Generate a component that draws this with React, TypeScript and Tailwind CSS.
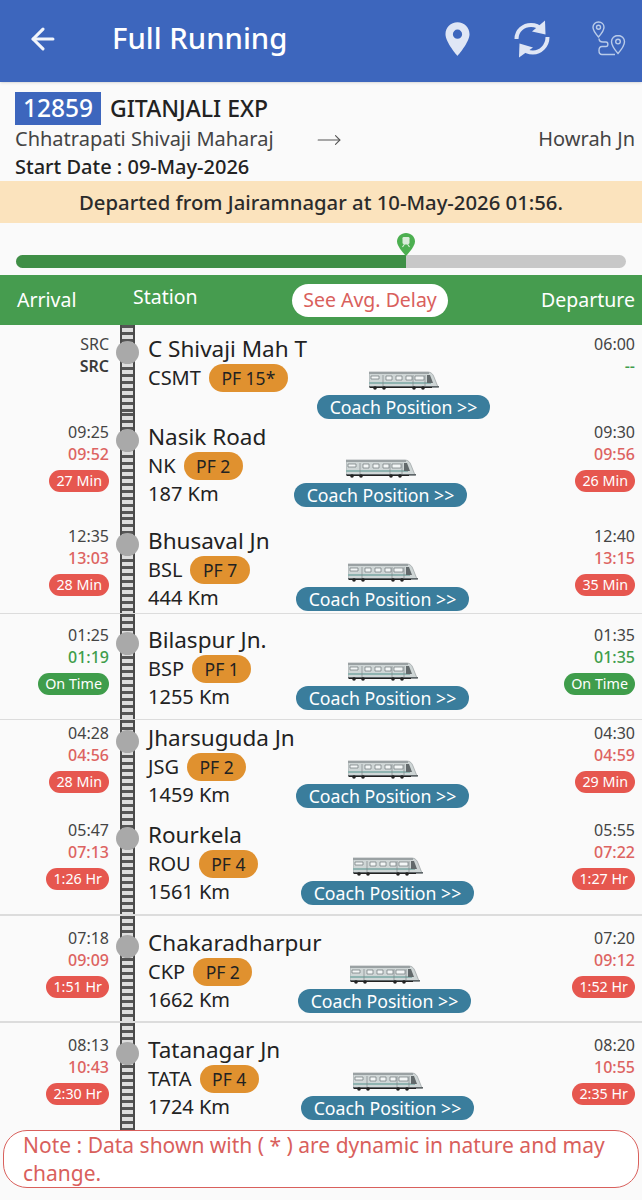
import { ArrowLeft, MoveRight } from 'lucide-react'

type Status = { text: string; tone: 'late' | 'ok' }

type Stop = {
  name: string
  code: string
  pf: string
  km?: string
  arr: string
  arrAct: string
  arrStatus?: Status
  dep: string
  depAct: string
  depStatus?: Status
  rowClass: string
  topClass: string
  coachClass: string
}

const late = (text: string): Status => ({ text, tone: 'late' })
const onTime: Status = { text: 'On Time', tone: 'ok' }

const stops: Stop[] = [
  { name: 'C Shivaji Mah T', code: 'CSMT', pf: 'PF 15*', arr: 'SRC', arrAct: 'SRC', dep: '06:00', depAct: '--', rowClass: 'h-[88px]', topClass: 'pt-[7px]', coachClass: 'ml-[23px]' },
  { name: 'Nasik Road', code: 'NK', pf: 'PF 2', km: '187 Km', arr: '09:25', arrAct: '09:52', arrStatus: late('27 Min'), dep: '09:30', depAct: '09:56', depStatus: late('26 Min'), rowClass: 'h-[104px]', topClass: 'pt-[7px]', coachClass: 'ml-0' },
  { name: 'Bhusaval Jn', code: 'BSL', pf: 'PF 7', km: '444 Km', arr: '12:35', arrAct: '13:03', arrStatus: late('28 Min'), dep: '12:40', depAct: '13:15', depStatus: late('35 Min'), rowClass: 'h-[97px] border-b border-[#dcdcdc]', topClass: 'pt-[7px]', coachClass: 'ml-[2px]' },
  { name: 'Bilaspur Jn.', code: 'BSP', pf: 'PF 1', km: '1255 Km', arr: '01:25', arrAct: '01:19', arrStatus: onTime, dep: '01:35', depAct: '01:35', depStatus: onTime, rowClass: 'h-[106px] border-b border-[#dcdcdc]', topClass: 'pt-[9px]', coachClass: 'ml-[2px]' },
  { name: 'Jharsuguda Jn', code: 'JSG', pf: 'PF 2', km: '1459 Km', arr: '04:28', arrAct: '04:56', arrStatus: late('28 Min'), dep: '04:30', depAct: '04:59', depStatus: late('29 Min'), rowClass: 'h-[91px]', topClass: 'pt-[1px]', coachClass: 'ml-[2px]' },
  { name: 'Rourkela', code: 'ROU', pf: 'PF 4', km: '1561 Km', arr: '05:47', arrAct: '07:13', arrStatus: late('1:26 Hr'), dep: '05:55', depAct: '07:22', depStatus: late('1:27 Hr'), rowClass: 'h-[105px] border-b-2 border-[#dcdcdc]', topClass: 'pt-[7px]', coachClass: 'ml-[7px]' },
  { name: 'Chakaradharpur', code: 'CKP', pf: 'PF 2', km: '1662 Km', arr: '07:18', arrAct: '09:09', arrStatus: late('1:51 Hr'), dep: '07:20', depAct: '09:12', depStatus: late('1:52 Hr'), rowClass: 'h-[107px] border-b-2 border-[#dcdcdc]', topClass: 'pt-[10px]', coachClass: 'ml-[4px]' },
  { name: 'Tatanagar Jn', code: 'TATA', pf: 'PF 4', km: '1724 Km', arr: '08:13', arrAct: '10:43', arrStatus: late('2:30 Hr'), dep: '08:20', depAct: '10:55', depStatus: late('2:35 Hr'), rowClass: 'h-[107px]', topClass: 'pt-[10px]', coachClass: 'ml-[7px]' },
]

function PinIcon() {
  return (
    <svg width="25" height="36" viewBox="0 0 26 36" fill="#dfe6f5" aria-hidden="true">
      <path fillRule="evenodd" d="M13 0.5C5.900 0.500 0.500 6 0.500 13c0 8.400 12.500 22.500 12.500 22.500S25.500 21.400 25.500 13C25.500 6 20.100 0.500 13 0.500zM13 8.200a4.800 4.800 0 1 1 0 9.600a4.800 4.800 0 0 1 0-9.600z" />
    </svg>
  )
}

function SyncIcon() {
  return (
    <svg width="36" height="38" viewBox="0 0 36 38" fill="none" aria-hidden="true">
      <path d="M2.500 19C2.500 10.500 9.500 5 17 5c4.500 0 8 1.500 10.500 4.500" stroke="#dfe6f5" strokeWidth="4" />
      <path d="M31 0.500L31.500 14.500L18 11.500z" fill="#dfe6f5" />
      <path d="M33.500 17C33.500 26 26.500 32.500 19 32.500c-4.500 0-8-1.500-10.500-4.500" stroke="#dfe6f5" strokeWidth="4" />
      <path d="M5 37.500L5.500 23.500L19 27.500z" fill="#dfe6f5" />
    </svg>
  )
}

function RouteIcon() {
  return (
    <svg width="34" height="36" viewBox="0 0 34 36" fill="none" stroke="#b9cbe9" strokeWidth="1.400" aria-hidden="true">
      <path d="M6.500 1C3.400 1 1 3.300 1 6.300c0 3.600 5.500 9.700 5.500 9.700S12 9.900 12 6.300C12 3.300 9.600 1 6.500 1z" />
      <circle cx="6.500" cy="6.300" r="2" />
      <path d="M26 14.500c-3.600 0-6.500 2.800-6.500 6.200c0 4.300 6.500 11.800 6.500 11.800s6.500-7.500 6.500-11.800c0-3.400-2.900-6.200-6.500-6.200z" />
      <circle cx="26" cy="20.600" r="2.300" />
      <path d="M7 17.500c0 2.500 1.500 3.500 4 3.500h3c2.500 0 2.500 4.500 0 4.500H10c-4 0-4 8 0 8h13" />
    </svg>
  )
}

function TrainPic() {
  return (
    <svg width="70" height="19" viewBox="0 0 70 19" aria-hidden="true">
      <path d="M0 1h59c3 0 5 2 6 5l4 10H0z" fill="#cfd6d6" stroke="#8b9294" strokeWidth="0.600" />
      <rect x="0" y="1" width="60" height="2" fill="#9aa1a3" />
      <rect x="0" y="11" width="62" height="2" fill="#8fb3b0" />
      <path d="M2 5h8v3H2zM17 5h6v4h-6zM27 5h6v4h-6zM37 5h6v4h-6zM46 5h9v4h-9z" fill="#f3f6f6" stroke="#6f7779" strokeWidth="0.700" />
      <path d="M58 4h3l3 8h-6z" fill="#62696b" />
      <path d="M14 4v11M44 4v11M56 4v11" stroke="#7f8789" strokeWidth="0.700" />
      <rect x="0" y="15" width="70" height="1.600" fill="#5e6568" />
      <rect x="1" y="16" width="62" height="1" fill="#222" />
      <circle cx="6" cy="17" r="1.800" fill="#222" />
      <circle cx="15" cy="17" r="1.800" fill="#222" />
      <circle cx="45" cy="17" r="1.800" fill="#222" />
      <circle cx="54" cy="17" r="1.800" fill="#222" />
    </svg>
  )
}

function TimeCell({
  planned,
  actual,
  status,
}: {
  planned: string
  actual: string
  status?: Status
}) {
  const isSrc = actual === 'SRC'
  const isEmpty = actual === '--'
  const actualTone = isSrc
    ? 'text-[#3a3a3a] font-semibold'
    : isEmpty || status?.tone === 'ok'
      ? 'text-[#3f9d4b] font-medium'
      : 'text-[#dd6361] font-medium'
  return (
    <div className="flex flex-col items-end">
      <p className="text-[16px] leading-[22px] text-[#444]">{planned}</p>
      <p className={`text-[16px] leading-[22px] ${actualTone}`}>{actual}</p>
      {status && (
        <span
          className={`mt-[5px] flex h-[22px] items-center rounded-full px-[7px] text-[14.300px] text-white ${
            status.tone === 'ok' ? 'bg-[#3f9d4b]' : 'bg-[#e6574f]'
          }`}
        >
          {status.text}
        </span>
      )}
    </div>
  )
}

function StopRow({ stop }: { stop: Stop }) {
  return (
    <div className={`flex ${stop.rowClass}`}>
      <div className={`w-[109px] shrink-0 ${stop.topClass}`}>
        <div className="mt-px">
          <TimeCell planned={stop.arr} actual={stop.arrAct} status={stop.arrStatus} />
        </div>
      </div>
      <div
        className={`ml-[11px] w-[15px] shrink-0 self-stretch bg-[linear-gradient(90deg,#4a4a4a_0,#4a4a4a_2px,transparent_2px,transparent_13px,#4a4a4a_13px),repeating-linear-gradient(180deg,#555_0,#555_3px,#dedede_3px,#dedede_7px)] ${stop.topClass}`}
      >
        <div className="mt-[9px] -ml-[4px] h-[23px] w-[23px] rounded-full bg-[#a9a9a9]" />
      </div>
      <div className={`ml-[13px] w-[146px] shrink-0 whitespace-nowrap ${stop.topClass}`}>
        <p className="text-[22.500px] leading-[34px] text-[#222]">{stop.name}</p>
        <div className="-mt-[2px] flex items-center gap-[8px]">
          <span className="text-[20px] leading-[28px] text-[#222]">{stop.code}</span>
          <span className="flex h-[28px] items-center rounded-full bg-[#e0912f] px-[12.500px] text-[17.500px] text-[#222]">
            {stop.pf}
          </span>
        </div>
        {stop.km && <p className="text-[20px] leading-[28px] text-[#222]">{stop.km}</p>}
      </div>
      <div className={`flex flex-col items-center ${stop.coachClass} ${stop.topClass}`}>
        <div className="mt-[39px]">
          <TrainPic />
        </div>
        <span className="mt-[5px] flex h-[24px] w-[173px] items-center justify-center rounded-full bg-[#3a7d9c] text-[17.700px] whitespace-nowrap text-white">
          Coach Position &gt;&gt;
        </span>
      </div>
      <div className={`mr-[7px] flex-1 ${stop.topClass}`}>
        <div className="mt-px">
          <TimeCell planned={stop.dep} actual={stop.depAct} status={stop.depStatus} />
        </div>
      </div>
    </div>
  )
}

export default function App() {
  return (
    <div className="h-[1200px] w-[642px] overflow-hidden bg-[#fafafa] font-['Noto_Sans',sans-serif]">
      <header className="flex h-[82px] items-center bg-[#3d66bd] pb-[5px] shadow-sm">
        <ArrowLeft size={34} strokeWidth={2.200} className="ml-[26px] text-[#f2f5fb]" aria-hidden="true" />
        <h1 className="ml-[52px] flex-1 text-[29.300px] font-medium text-white">Full Running</h1>
        <div className="flex items-center">
          <PinIcon />
          <div className="ml-[44px]">
            <SyncIcon />
          </div>
          <div className="mr-[16px] ml-[42px]">
            <RouteIcon />
          </div>
        </div>
      </header>

      <section className="h-[99px] pt-[9px] pr-[7px] pl-[15px]">
        <div className="flex items-center gap-[9px]">
          <span className="flex h-[33px] w-[86px] items-center justify-center bg-[#3d66bd] text-[24.500px] font-medium text-white">
            12859
          </span>
          <span className="text-[23px] font-medium text-[#222]">GITANJALI EXP</span>
        </div>
        <div className="-mt-[2px] flex h-[30px] items-center text-[20px] text-[#444]">
          <span className="w-[301px] whitespace-nowrap">Chhatrapati Shivaji Maharaj</span>
          <MoveRight size={26} strokeWidth={1} className="mt-[2px] text-[#555]" aria-hidden="true" />
          <span className="ml-auto">Howrah Jn</span>
        </div>
        <p className="text-[20px] leading-[26px] font-medium text-[#222]">Start Date : 09-May-2026</p>
      </section>

      <div className="flex h-[42px] items-center justify-center bg-[#fbe3bd] text-[20.300px] font-medium text-[#2b2b2b]">
        Departed from Jairamnagar at 10-May-2026 01:56.
      </div>

      <div className="relative h-[52px] px-[16px] pt-[32px]">
        <div className="flex h-[13px] overflow-hidden rounded-full bg-[#c8c8c8]">
          <div className="w-[390px] bg-[#3f8f46]" />
        </div>
        <svg width="18" height="23" viewBox="0 0 18 23" className="absolute top-[10px] left-[397px]" aria-hidden="true">
          <path d="M9 0C4 0 0 3.800 0 8.600C0 14 9 23 9 23s9-9 9-14.400C18 3.800 14 0 9 0z" fill="#4caf50" />
          <rect x="5.500" y="4" width="7" height="7" rx="1.200" fill="#d9ecd9" />
          <path d="M5.500 14l2-3h3l2 3" stroke="#d9ecd9" strokeWidth="1.100" fill="none" />
        </svg>
      </div>

      <div className="flex h-[50px] items-center bg-[#469c4f] pr-[7px] pl-[17px] text-[19.500px] text-white">
        <span className="w-[116px]">Arrival</span>
        <span className="-mt-[6px] w-[159px]">Station</span>
        <span className="flex h-[33px] w-[156px] items-center justify-center rounded-full bg-white text-[#d9605c]">
          See Avg. Delay
        </span>
        <span className="ml-auto">Departure</span>
      </div>

      <div>
        {stops.map((stop) => (
          <StopRow key={stop.code} stop={stop} />
        ))}
      </div>

      <div className="mx-[3px] h-[58px] rounded-[24px] border-[1.500px] border-[#d9605c] bg-white pr-[14px] pl-[19px] text-[21px] leading-[28px] text-[#d9605c]">
        Note : Data shown with ( * ) are dynamic in nature and may change.
      </div>
    </div>
  )
}
